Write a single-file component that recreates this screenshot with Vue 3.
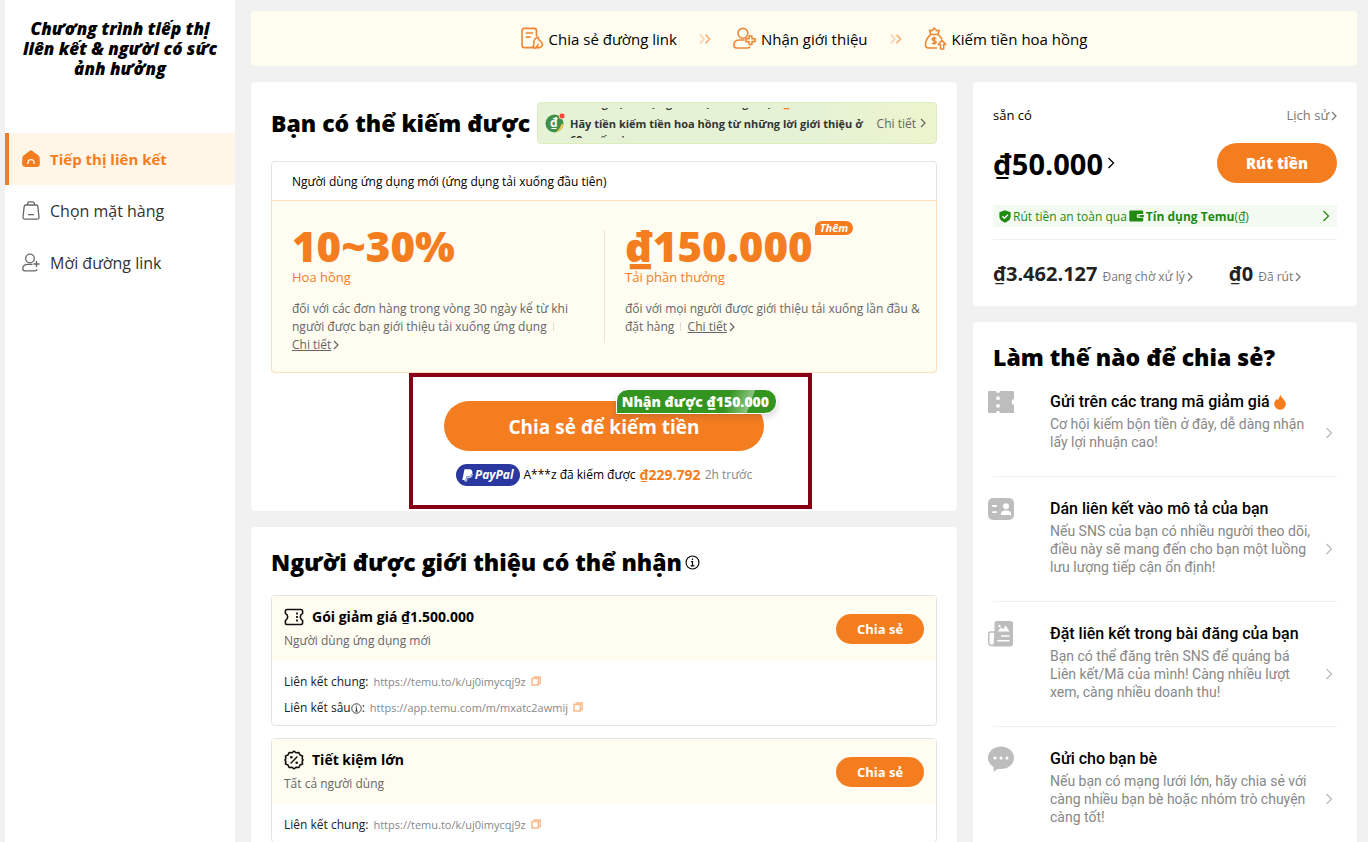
<template>
  <svg class="symbols" aria-hidden="true">
    <symbol id="i-chevron" viewBox="0 0 8 12">
      <path d="M1.5 1l5 5-5 5" fill="none" stroke="currentColor" stroke-width="1.3" />
    </symbol>
    <symbol id="i-chevron-small" viewBox="0 0 6 10">
      <path d="M1 1l4 4-4 4" fill="none" stroke="currentColor" stroke-width="1.2" />
    </symbol>
    <symbol id="i-home" viewBox="0 0 18 18">
      <path d="M7.6.9a2.2 2.2 0 0 1 2.8 0l6 4.6c.9.7 1.2 1.500 1.300 2.600l.2 5.600c0 2-1.300 3.300-3.300 3.300H3.400C1.400 17 .1 15.700.1 13.700l.2-5.600c.1-1.100.4-1.900 1.300-2.600z" fill="#f47d20" />
      <path d="M5.900 14v-1.300a3.100 3.100 0 0 1 6.200 0V14" fill="none" stroke="#fff6e8" stroke-width="1.400" />
    </symbol>
    <symbol id="i-bag" viewBox="0 0 18 20">
      <g fill="none" stroke="#666" stroke-width="1.300">
        <path d="M3.800 4h10.400c1 0 1.500.5 1.600 1.400L17 16c.1 1.400-.6 2.200-2 2.200H3c-1.400 0-2.100-.8-2-2.200L2.200 5.400C2.300 4.500 2.800 4 3.800 4zM5.600 4V2.800C5.600 1.500 6.500.9 7.700.9h2.600c1.200 0 2.100.6 2.100 1.900V4M6 13.700h6" />
      </g>
    </symbol>
    <symbol id="i-user" viewBox="0 0 18 20">
      <g fill="none" stroke="#666" stroke-width="1.300">
        <circle cx="8" cy="5.500" r="4.300" />
        <path d="M10.500 11.300H5.700C2.500 11.300.8 13.200.8 15.800c0 1.200.8 2 2 2h10c1.300 0 2.100-.6 2.100-1.500M11.500 11h6M14.500 8v6" />
      </g>
    </symbol>
    <symbol id="i-doc" viewBox="0 0 22 22">
      <g fill="none" stroke="#f08532" stroke-width="1.500">
        <path d="M10.500 19.700H3.300C1.800 19.700 1 18.900 1 17.400V3.600C1 2 1.800 1.300 3.300 1.300h9.200c1.500 0 2.300.7 2.300 2.300v5.600M4.500 5.700h7M4.500 9.700h4.700" />
        <path d="M10.300 19.500c1.400-.3 2-1.300 2-2.700v-2c0-3 1.700-4.600 4.200-5-.3 2.300 1.200 3.300 2.500 4.300 1.700 1.400 2.100 3 .9 4.400-1 1.300-2.700 1.500-4.200 1.500l.3-2.500-2.300 2.800z" />
      </g>
    </symbol>
    <symbol id="i-invite" viewBox="0 0 22 22">
      <g fill="none" stroke="#f08532" stroke-width="1.500" stroke-linejoin="round">
        <circle cx="9.500" cy="6" r="4.700" />
        <path d="M11.200 12.500H6c-3.500 0-5.200 2-5.200 5 0 1.600.8 2.500 2.400 2.500h11c1.200 0 1.900-.4 2.200-1.300" />
        <path d="M15.400 8.600h2.700v2.700h3.100V14h-3.100v2.800h-2.700V14h-3v-2.700h3z" />
      </g>
    </symbol>
    <symbol id="i-money" viewBox="0 0 22 23">
      <g fill="none" stroke="#f08532" stroke-width="1.500" stroke-linejoin="round">
        <path d="M12.500 21H4c-2 0-3-1.200-3-3 0-4 2.300-8 5.200-10.600L5 3.200l2.500.6L9.700 1l2.600 2.800 2.400-.6-1.300 4.200c1.800 1.400 3.200 3 4.100 5M6 7.400h7.600" />
        <path d="M11.700 11.800c-.7-.8-4-1.200-4 .5 0 1.900 4 1 4 3 0 1.800-3.400 1.700-4.200.6M9.700 9.800v8" />
        <path d="M17.500 13.200l3.700 4.200h-2v4.500H16v-4.500h-2.200z" fill="#fffcf2" />
      </g>
    </symbol>
    <symbol id="i-double" viewBox="0 0 12 10">
      <path d="M1 .6L5 5 1 9.400" fill="none" stroke="#fbd3b0" stroke-width="1.600" />
      <path d="M6.500.6l4 4.400-4 4.400" fill="none" stroke="#f7b078" stroke-width="1.600" />
    </symbol>
    <symbol id="i-coin" viewBox="0 0 20 20">
      <circle cx="9.500" cy="10.500" r="9" fill="#3c9146" />
      <path d="M18.400 11.500a9 9 0 0 1-8.400 8c3-2 5.500-4.500 6.600-9z" fill="#f2c54c" />
      <circle cx="17" cy="3" r="3" fill="#f7483b" stroke="#e6f3d4" stroke-width=".8" />
    </symbol>
    <symbol id="i-info" viewBox="0 0 16 16">
      <circle cx="8" cy="8" r="6.900" fill="none" stroke="currentColor" stroke-width="1.200" />
      <path d="M8 3.700v1.600M6.500 7H8v4.700M6 11.700h4" fill="none" stroke="currentColor" stroke-width="1.300" />
    </symbol>
    <symbol id="i-ticket" viewBox="0 0 20 18">
      <path d="M3 1.500h14c1 0 1.600.6 1.600 1.600v2.300c-1.700 1-2.300 2-2.300 3.600s.6 2.600 2.300 3.600v2.300c0 1-.6 1.600-1.600 1.600H3c-1 0-1.600-.6-1.600-1.600v-2.300C3.100 11.600 3.700 10.600 3.700 9s-.6-2.600-2.300-3.600V3.100c0-1 .6-1.600 1.600-1.600z" fill="none" stroke="#111" stroke-width="1.600" />
      <path d="M13 4.500v1.900M13 8v2M13 11.600v1.900" stroke="#111" stroke-width="1.800" />
    </symbol>
    <symbol id="i-percent" viewBox="0 0 20 20">
      <path d="M10 1.200l2.200 1.600 2.700-.3 1.100 2.500 2.500 1.100-.3 2.700L19 10l-.8 1.200.3 2.700-2.500 1.100-1.100 2.500-2.700-.3L10 18.800l-2.200-1.600-2.700.3L4 15l-2.500-1.100.3-2.700L1 10l.8-1.200-.3-2.700L4 5l1.100-2.500 2.700.3z" fill="none" stroke="#111" stroke-width="1.600" stroke-linejoin="round" />
      <path d="M13.400 6.600l-6.800 6.800" stroke="#111" stroke-width="1.400" />
      <circle cx="7.300" cy="7.300" r="1.300" fill="#111" />
      <circle cx="12.700" cy="12.700" r="1.300" fill="#111" />
    </symbol>
    <symbol id="i-copy" viewBox="0 0 10 10">
      <path d="M2.500 1h6.700v6.500H7.500" fill="none" stroke="#f7b98a" stroke-width="1.400" />
      <rect x="1" y="2.400" width="6.300" height="6.600" fill="none" stroke="#f7b98a" stroke-width="1.500" />
    </symbol>
    <symbol id="i-shield" viewBox="0 0 12 13">
      <path d="M6 .3l5.600 1.900v4.600c0 2.900-2.300 4.600-5.600 5.900C2.700 11.400.4 9.700.4 6.800V2.200z" fill="#218a10" />
      <path d="M3.400 6.200l2 2 3.500-3.500" fill="none" stroke="#fff" stroke-width="1.400" />
    </symbol>
    <symbol id="i-wallet" viewBox="0 0 15 12">
      <path d="M1.200.5h12.100c.6 0 .9.300.9.900v2.700H9.700C8.400 4.100 7.700 5 7.700 6.100s.7 2 2 2h4.500v2.700c0 .4-.3.700-.9.700H1.200c-.6 0-.9-.3-.9-.8V1.300c0-.5.3-.8.900-.8z" fill="#218a10" />
      <path d="M9.800 5h5v2.200h-5a1.100 1.100 0 0 1 0-2.200z" fill="#218a10" />
      <circle cx="10" cy="6.100" r=".8" fill="#fff" />
    </symbol>
    <symbol id="i-flame" viewBox="0 0 12 16">
      <path d="M6.200.2c.4 2.200 2 3.400 3.300 5 1.200 1.400 2.300 3 2.300 5A5.800 5.800 0 0 1 6 15.800 5.800 5.800 0 0 1 .2 10c0-2.100 1-3.900 2.600-5.100l.9 1.200C4.900 4.500 5.900 2.500 6.200.2z" fill="#f47d20" />
    </symbol>
    <symbol id="i-coupon" viewBox="0 0 26 26">
      <path d="M1.500 2H8a2 2 0 0 0 4 0h12.500c1 0 1.500.5 1.500 1.500V10a3.100 3.100 0 0 0 0 6v6.500c0 1-.5 1.500-1.500 1.500H12a2 2 0 0 0-4 0H1.500C.5 24 0 23.500 0 22.500v-19C0 2.500.5 2 1.500 2z" fill="#bdbdbd" />
      <circle cx="10" cy="9.200" r="1.900" fill="#fff" />
      <circle cx="10" cy="16.800" r="1.900" fill="#fff" />
    </symbol>
    <symbol id="i-card" viewBox="0 0 26 26">
      <rect y="2" width="26" height="22" rx="5" fill="#bdbdbd" />
      <path d="M4.200 10h4.600M4.200 16.200h4.600" stroke="#fff" stroke-width="1.800" />
      <circle cx="18" cy="10.300" r="3" fill="#fff" />
      <path d="M12.800 19c0-3 1.500-4.400 5.200-4.400s5.200 1.400 5.200 4.400z" fill="#fff" />
    </symbol>
    <symbol id="i-news" viewBox="0 0 26 26">
      <path d="M7 11H2.500C1.300 11 .8 11.700.8 12.800v9c0 1.800 1 2.700 2.800 2.700S6.500 23.500 6.500 22z" fill="none" stroke="#bdbdbd" stroke-width="1.500" />
      <path d="M9 0h13.500A2.500 2.500 0 0 1 25 2.500v20a2.900 2.900 0 0 1-3 2.900H4c1.700-.6 2.500-1.600 2.500-3.500V2.500A2.500 2.500 0 0 1 9 0z" fill="#bdbdbd" />
      <path d="M10 10.500l2.800-4.300 2.200 2.300 2.600-4 4 6z" fill="#fff" />
      <circle cx="11.500" cy="5" r="1.200" fill="#fff" />
      <path d="M13 15h8.500M9.500 19.800h12" stroke="#fff" stroke-width="1.500" />
    </symbol>
    <symbol id="i-chat" viewBox="0 0 26 26">
      <path d="M13 .5c7.400 0 13 5 13 11.300S20.400 23 13 23c-1 0-2-.1-2.900-.3L5.600 25.700v-4.800C2.200 18.900 0 15.700 0 11.800 0 5.500 5.600.5 13 .5z" fill="#bdbdbd" />
      <g fill="#fff"><circle cx="7" cy="12" r="1.500" /><circle cx="13" cy="12" r="1.500" /><circle cx="19" cy="12" r="1.500" /></g>
    </symbol>
    <symbol id="i-paypal" viewBox="0 0 11 13">
      <path d="M2.500.3h4.700c2.300 0 3.500 1.300 3.100 3.500C9.900 6.300 8.300 7.400 6 7.400H4.300L3.500 11H.3z" fill="#fff" />
      <path d="M10.500 3.600c.4.600.5 1.300.3 2.200-.4 2.300-1.900 3.400-4.100 3.400H5.600L5 12.500H2.200L2.400 11h1.400l.8-3.300H6c2.500 0 4.100-1.500 4.500-4.100z" fill="#b9bfe6" />
    </symbol>
  </svg>

  <div class="page">
    <aside class="sidebar">
      <h1>Chương trình tiếp thị<br>liên kết &amp; người có sức<br>ảnh hưởng</h1>
      <nav>
        <a
          v-for="(item, i) in menu"
          :key="item.label"
          href="#"
          :class="{ active: i === activeMenu }"
          @click.prevent="activeMenu = i"
        >
          <svg class="nav-icon"><use :href="'#' + item.icon" /></svg>
          {{ item.label }}
        </a>
      </nav>
    </aside>

    <main>
      <section class="steps">
        <template v-for="(step, i) in steps" :key="step.label">
          <svg v-if="i > 0" class="double"><use href="#i-double" /></svg>
          <div class="step">
            <svg class="step-icon"><use :href="'#' + step.icon" /></svg>
            <span>{{ step.label }}</span>
          </div>
        </template>
      </section>

      <div class="columns">
        <div class="left">
          <section class="card earn">
            <div class="earn-head">
              <h2>Bạn có thể kiếm được</h2>
              <div class="notice">
                <span class="coin"><svg><use href="#i-coin" /></svg><b>₫</b></span>
                <div class="ticker">
                  <p>Những bạn được giới thiệu đang nhận <b>₫</b></p>
                  <p>Hãy tiền kiếm tiền hoa hồng từ những lời giới thiệu ở</p>
                  <p>69 quốc gia</p>
                </div>
                <a href="#">Chi tiết<svg class="chev small"><use href="#i-chevron-small" /></svg></a>
              </div>
            </div>

            <div class="reward">
              <div class="reward-head">Người dùng ứng dụng mới (ứng dụng tải xuống đầu tiên)</div>
              <div class="reward-body">
                <div class="reward-col">
                  <div class="big">10~30%</div>
                  <div class="big-label">Hoa hồng</div>
                  <p>
                    đối với các đơn hàng trong vòng 30 ngày kể từ khi<br>
                    người được bạn giới thiệu tải xuống ứng dụng <i class="bar"></i><br>
                    <a href="#">Chi tiết</a><svg class="chev small"><use href="#i-chevron-small" /></svg>
                  </p>
                </div>
                <div class="reward-col">
                  <div class="big">₫150.000<span class="more">Thêm</span></div>
                  <div class="big-label">Tải phần thưởng</div>
                  <p>
                    đối với mọi người được giới thiệu tải xuống lần đầu &amp;<br>
                    đặt hàng <i class="bar"></i> <a href="#">Chi tiết</a><svg class="chev small"><use href="#i-chevron-small" /></svg>
                  </p>
                </div>
              </div>
            </div>

            <div class="share">
              <button class="share-btn">
                Chia sẻ để kiếm tiền
                <span class="bonus">Nhận được ₫150.000</span>
              </button>
              <div class="earned">
                <span class="paypal"><svg><use href="#i-paypal" /></svg>PayPal</span>
                <span>A***z đã kiếm được</span>
                <strong>₫229.792</strong>
                <em>2h trước</em>
              </div>
              <div class="frame"></div>
            </div>
          </section>

          <section class="card receive">
            <h2>Người được giới thiệu có thể nhận<svg class="info"><use href="#i-info" /></svg></h2>
            <article v-for="offer in offers" :key="offer.title" class="offer">
              <header>
                <div>
                  <h3><svg><use :href="'#' + offer.icon" /></svg>{{ offer.title }}</h3>
                  <p>{{ offer.audience }}</p>
                </div>
                <button>Chia sẻ</button>
              </header>
              <ul>
                <li v-for="link in offer.links" :key="link.label">
                  <span>{{ link.label }}<svg v-if="link.info" class="info tiny"><use href="#i-info" /></svg>:</span>
                  <a href="#">{{ link.url }}</a>
                  <button aria-label="Sao chép"><svg><use href="#i-copy" /></svg></button>
                </li>
              </ul>
            </article>
          </section>
        </div>

        <div class="right">
          <section class="card balance">
            <div class="row">
              <span>sẵn có</span>
              <a href="#" class="muted">Lịch sử<svg class="chev small"><use href="#i-chevron-small" /></svg></a>
            </div>
            <div class="row amount-row">
              <a href="#" class="amount">₫50.000<svg class="chev"><use href="#i-chevron" /></svg></a>
              <button>Rút tiền</button>
            </div>
            <a href="#" class="safe">
              <svg class="shield"><use href="#i-shield" /></svg>
              <span>Rút tiền an toàn qua</span>
              <svg class="wallet"><use href="#i-wallet" /></svg>
              <span><b>Tín dụng Temu</b>(₫)</span>
              <svg class="chev"><use href="#i-chevron" /></svg>
            </a>
            <div class="stats">
              <a v-for="stat in stats" :key="stat.label" href="#">
                <b>{{ stat.value }}</b>{{ stat.label }}<svg class="chev small"><use href="#i-chevron-small" /></svg>
              </a>
            </div>
          </section>

          <section class="card howto">
            <h2>Làm thế nào để chia sẻ?</h2>
            <a v-for="tip in tips" :key="tip.title" href="#" class="tip">
              <svg class="tip-icon"><use :href="'#' + tip.icon" /></svg>
              <div class="tip-body">
                <h3>{{ tip.title }}<svg v-if="tip.hot" class="flame"><use href="#i-flame" /></svg></h3>
                <div class="tip-text">
                  <p>{{ tip.text }}</p>
                  <svg class="chev"><use href="#i-chevron" /></svg>
                </div>
              </div>
            </a>
          </section>
        </div>
      </div>
    </main>
  </div>
</template>

<script setup>
import { ref } from 'vue'

const activeMenu = ref(0)

const menu = [
  { label: 'Tiếp thị liên kết', icon: 'i-home' },
  { label: 'Chọn mặt hàng', icon: 'i-bag' },
  { label: 'Mời đường link', icon: 'i-user' }
]

const steps = [
  { label: 'Chia sẻ đường link', icon: 'i-doc' },
  { label: 'Nhận giới thiệu', icon: 'i-invite' },
  { label: 'Kiếm tiền hoa hồng', icon: 'i-money' }
]

const offers = [
  {
    title: 'Gói giảm giá ₫1.500.000',
    audience: 'Người dùng ứng dụng mới',
    icon: 'i-ticket',
    links: [
      { label: 'Liên kết chung', url: 'https://temu.to/k/uj0imycqj9z' },
      { label: 'Liên kết sâu', url: 'https://app.temu.com/m/mxatc2awmij', info: true }
    ]
  },
  {
    title: 'Tiết kiệm lớn',
    audience: 'Tất cả người dùng',
    icon: 'i-percent',
    links: [{ label: 'Liên kết chung', url: 'https://temu.to/k/uj0imycqj9z' }]
  }
]

const stats = [
  { value: '₫3.462.127', label: 'Đang chờ xử lý' },
  { value: '₫0', label: 'Đã rút' }
]

const tips = [
  {
    title: 'Gửi trên các trang mã giảm giá',
    text: 'Cơ hội kiếm bộn tiền ở đây, dễ dàng nhận lấy lợi nhuận cao!',
    icon: 'i-coupon',
    hot: true
  },
  {
    title: 'Dán liên kết vào mô tả của bạn',
    text: 'Nếu SNS của bạn có nhiều người theo dõi, điều này sẽ mang đến cho bạn một luồng lưu lượng tiếp cận ổn định!',
    icon: 'i-card'
  },
  {
    title: 'Đặt liên kết trong bài đăng của bạn',
    text: 'Bạn có thể đăng trên SNS để quảng bá Liên kết/Mã của mình! Càng nhiều lượt xem, càng nhiều doanh thu!',
    icon: 'i-news'
  },
  {
    title: 'Gửi cho bạn bè',
    text: 'Nếu bạn có mạng lưới lớn, hãy chia sẻ với càng nhiều bạn bè hoặc nhóm trò chuyện càng tốt!',
    icon: 'i-chat'
  }
]
</script>

<style>
body {
  background: #f1f1f1;
}
</style>

<style scoped>
* {
  box-sizing: border-box;
}
h1, h2, h3, p, ul {
  margin: 0;
  padding: 0;
}
a {
  color: inherit;
  text-decoration: none;
}
button {
  border: 0;
  padding: 0;
  font-family: inherit;
  cursor: pointer;
}
.symbols {
  position: absolute;
  width: 0;
  height: 0;
}
.page {
  display: flex;
  gap: 16px;
  height: 100vh;
  overflow: hidden;
  padding: 0 11px 0 5px;
  font-family: "Open Sans", "Noto Sans", sans-serif;
  font-size: 12px;
  color: #000;
}
.chev {
  flex: none;
  width: 8px;
  height: 12px;
}
.chev.small {
  width: 6px;
  height: 10px;
  margin-left: 2px;
  vertical-align: -1px;
}

.sidebar {
  flex: none;
  width: 230px;
  background: #fff;
}
.sidebar h1 {
  padding: 19px 0 54px;
  font-size: 17px;
  line-height: 20px;
  font-weight: 800;
  font-style: italic;
  text-align: center;
  white-space: nowrap;
}
.sidebar nav a {
  display: flex;
  align-items: center;
  gap: 10px;
  height: 52px;
  padding-left: 17px;
  font-size: 16px;
  color: #333;
}
.sidebar nav a.active {
  padding-left: 13px;
  border-left: 4px solid #f47d20;
  background: #fff6e8;
  color: #f47d20;
  font-size: 15px;
  font-weight: 700;
}
.nav-icon {
  width: 18px;
  height: 20px;
}

main {
  flex: 1;
  min-width: 0;
  padding-top: 11px;
}
.steps {
  display: flex;
  align-items: center;
  justify-content: center;
  gap: 22px;
  height: 55px;
  margin-bottom: 16px;
  border-radius: 4px;
  background: #fffcf0;
  font-size: 15px;
}
.step {
  display: flex;
  align-items: center;
  gap: 5px;
}
.step-icon {
  width: 23px;
  height: 23px;
}
.double {
  width: 12px;
  height: 10px;
}
.columns {
  display: flex;
  align-items: flex-start;
  gap: 16px;
}
.left {
  flex: 1;
  min-width: 0;
}
.right {
  flex: none;
  width: 384px;
}
.card {
  margin-bottom: 16px;
  padding: 20px;
  border-radius: 4px;
  background: #fff;
}
.card h2 {
  font-size: 23px;
  font-weight: 800;
  white-space: nowrap;
}

.earn {
  padding-bottom: 25px;
}
.earn-head {
  display: flex;
  align-items: center;
  justify-content: space-between;
  margin-bottom: 17px;
}
.notice {
  flex: none;
  display: flex;
  align-items: center;
  gap: 5px;
  width: 400px;
  height: 42px;
  padding: 0 10px 0 7px;
  border: 1px solid #dcedc2;
  border-radius: 4px;
  background: linear-gradient(90deg, #e6f2d5 70%, #edf5cd);
}
.coin {
  position: relative;
  flex: none;
  width: 20px;
  height: 20px;
}
.coin svg {
  width: 20px;
  height: 20px;
}
.coin b {
  position: absolute;
  left: 5px;
  top: 2px;
  line-height: 16px;
  color: #fff;
}
/* rolling text, caught between two lines */
.ticker {
  flex: 1;
  height: 30px;
  overflow: hidden;
  font-size: 11px;
  line-height: 16px;
  font-weight: 700;
  color: #333;
  white-space: nowrap;
}
.ticker p:first-child {
  margin: -13px 0 5px;
}
.ticker b {
  color: #f47d20;
}
.notice a {
  display: flex;
  align-items: center;
  gap: 2px;
  color: #666;
}

.reward {
  border: 1px solid #e5e5e5;
  border-radius: 4px;
}
.reward-head {
  height: 38px;
  padding-left: 20px;
  line-height: 40px;
}
.reward-body {
  display: flex;
  margin: 0 -1px -1px;
  padding: 29px 20px;
  border: 1px solid #fce0bf;
  border-radius: 0 0 4px 4px;
  background: #fffcf2;
}
.reward-col {
  flex: none;
  width: 50%;
  height: 113px;
  white-space: nowrap;
}
.reward-col + .reward-col {
  padding-left: 20px;
  border-left: 1px solid #e8e4dc;
}
.big {
  display: flex;
  align-items: flex-start;
  height: 36px;
  font-size: 42px;
  line-height: 32px;
  font-weight: 800;
  color: #f47d20;
}
.more {
  margin: -9px 0 0 2px;
  padding: 0 5px;
  border-radius: 7px 7px 7px 0;
  background: #f47d20;
  color: #fff;
  font-size: 11px;
  line-height: 14px;
  font-weight: 700;
  font-style: italic;
}
.big-label {
  margin-bottom: 12px;
  font-size: 13px;
  line-height: 22px;
  color: #f47d20;
}
.reward-col p {
  font-size: 12px;
  line-height: 18px;
  color: #666;
}
.reward-col p a {
  text-decoration: underline;
}
.bar {
  display: inline-block;
  width: 1px;
  height: 9px;
  margin: 0 3px;
  background: #ddd;
}

.share {
  position: relative;
  display: flex;
  flex-direction: column;
  align-items: center;
  padding-top: 28px;
}
.share-btn {
  position: relative;
  width: 320px;
  height: 50px;
  padding-top: 2px;
  border-radius: 25px;
  background: #f47d20;
  color: #fff;
  font-size: 19px;
  font-weight: 700;
}
.bonus {
  position: absolute;
  right: -13px;
  top: -12px;
  padding: 0 7px 0 5px;
  border: 1px solid #fff;
  border-radius: 12px 12px 12px 0;
  background: linear-gradient(110deg, #33941f 68%, #8cc47f 82%, #33941f 83%);
  box-shadow: 0 3px 6px rgba(60, 40, 80, 0.2);
  font-size: 14px;
  line-height: 23px;
  font-weight: 800;
}
.earned {
  display: flex;
  align-items: center;
  gap: 4px;
  margin-top: 13px;
  font-size: 12px;
  line-height: 22px;
}
.earned strong {
  color: #f47d20;
  font-size: 14px;
  font-weight: 700;
}
.earned em {
  color: #888;
  font-style: normal;
}
.paypal {
  display: flex;
  align-items: center;
  gap: 2px;
  height: 22px;
  padding: 0 6px;
  border-radius: 11px;
  background: #2b38a0;
  color: #fff;
  font-size: 12px;
  font-weight: 700;
  font-style: italic;
}
.paypal svg {
  width: 11px;
  height: 13px;
}
/* highlight box round the share block */
.frame {
  position: absolute;
  top: 0;
  left: 138px;
  width: 403px;
  height: 136px;
  border: 4px solid #880015;
  pointer-events: none;
}

.receive h2 {
  display: flex;
  align-items: center;
  gap: 3px;
  height: 30px;
  margin-bottom: 18px;
}
.info {
  width: 15px;
  height: 15px;
}
.info.tiny {
  width: 11px;
  height: 11px;
  vertical-align: -2px;
}
.offer {
  margin-bottom: 12px;
  border: 1px solid #e5e5e5;
  border-radius: 4px;
}
.offer header {
  display: flex;
  align-items: center;
  justify-content: space-between;
  height: 65px;
  padding: 0 12px;
  background: #fffcf2;
}
.offer h3 {
  display: flex;
  align-items: center;
  gap: 8px;
  font-size: 14px;
  line-height: 24px;
}
.offer h3 svg {
  width: 20px;
  height: 20px;
}
.offer p {
  font-size: 12px;
  line-height: 24px;
  color: #666;
}
.offer header button {
  width: 88px;
  height: 30px;
  border-radius: 15px;
  background: #f47d20;
  color: #fff;
  font-size: 13px;
  font-weight: 700;
}
.offer ul {
  padding: 7px 12px 5px;
  list-style: none;
}
.offer li {
  display: flex;
  align-items: center;
  gap: 5px;
  height: 26px;
  color: #222;
}
.offer li a {
  font-size: 11px;
  color: #888;
}
.offer li button {
  width: 10px;
  height: 10px;
  background: none;
}
.offer li button svg {
  display: block;
  width: 10px;
  height: 10px;
}

.balance {
  height: 224px;
}
.row {
  display: flex;
  align-items: center;
  justify-content: space-between;
  height: 26px;
  font-size: 13px;
}
.muted {
  color: #777;
}
.amount-row {
  height: 40px;
  margin: 15px 0 22px;
}
.amount {
  display: flex;
  align-items: center;
  gap: 4px;
  font-size: 29px;
  font-weight: 700;
}
.amount-row button {
  width: 120px;
  height: 40px;
  border-radius: 20px;
  background: #f47d20;
  color: #fff;
  font-size: 15px;
  font-weight: 800;
}
.safe {
  display: flex;
  align-items: center;
  gap: 2px;
  height: 22px;
  padding: 0 7px 0 6px;
  background: #f3faf1;
  color: #218a10;
  font-size: 12px;
}
.safe .chev {
  margin-left: auto;
}
.shield {
  width: 12px;
  height: 13px;
}
.wallet {
  width: 15px;
  height: 12px;
}
.stats {
  display: flex;
  gap: 36px;
  height: 60px;
  margin-top: 12px;
  padding-top: 20px;
  border-top: 1px solid #f1f1f1;
  line-height: 28px;
  white-space: nowrap;
  color: #777;
}
.stats b {
  margin-right: 5px;
  font-size: 20px;
  font-weight: 700;
  color: #222;
}

.howto h2 {
  height: 28px;
  line-height: 30px;
}
.tip {
  display: flex;
  gap: 36px;
  padding: 22px 0 25px;
  font-family: Roboto, sans-serif;
}
.tip + .tip {
  border-top: 1px solid #f1f1f1;
}
.tip-icon {
  flex: none;
  width: 26px;
  height: 26px;
  margin: -3px 0 0 -5px;
}
.tip-body {
  flex: 1;
}
.tip h3 {
  display: flex;
  align-items: center;
  gap: 4px;
  margin-bottom: 3px;
  font-size: 16px;
  line-height: 20px;
  font-weight: 500;
}
.flame {
  width: 12px;
  height: 16px;
}
.tip-text {
  display: flex;
  align-items: center;
  justify-content: space-between;
  padding-right: 4px;
  font-size: 14px;
  line-height: 18px;
  color: #888;
}
.tip-text p {
  width: 266px;
}
.tip-text .chev {
  color: #bbb;
}
</style>
